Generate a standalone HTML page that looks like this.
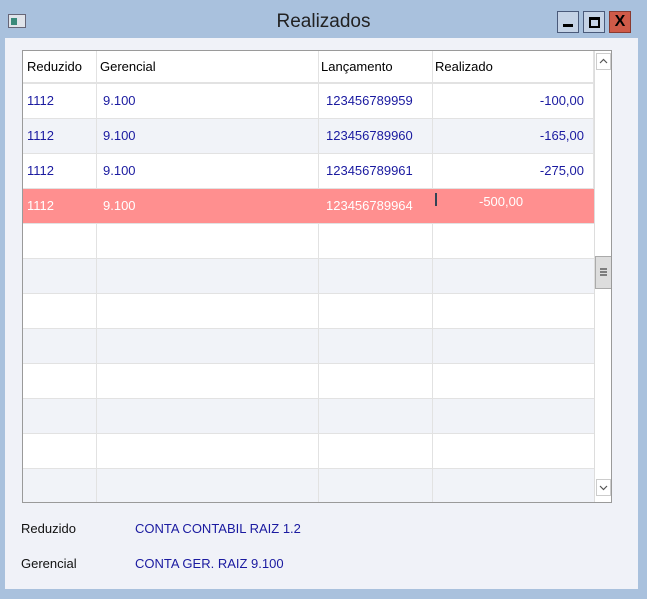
<!DOCTYPE html><html><head><style>
body{margin:0;width:647px;height:599px;background:#a9c1dd;position:relative;overflow:hidden;font-family:"Liberation Sans",sans-serif;}
.t{position:absolute;top:11px;left:0;width:647px;text-align:center;font-size:19px;color:#222;}
.panel{position:absolute;left:5px;top:38px;width:633px;height:551px;background:#f0f2f8;}
.grid{position:absolute;left:22px;top:50px;width:588px;height:451px;border:1px solid #9a9a9a;background:#fff;overflow:hidden;}
.r{position:absolute;left:0;width:571px;height:35px;border-bottom:1px solid #e2e2e2;box-sizing:border-box;}
.c{position:absolute;top:0;height:100%;border-right:1px solid #e2e2e2;box-sizing:border-box;font-size:13px;color:#1a1aa0;line-height:34px;}
.sb{position:absolute;left:571px;top:0;width:17px;height:451px;background:#fff;border-left:1px solid #ddd;}
.lbl{position:absolute;font-size:13px;}
.btn{position:absolute;top:11px;width:22px;height:22px;box-sizing:border-box;border:1px solid #4a5a7a;background:#c5d3e6;}
.ar{position:absolute;left:1px;width:15px;height:17px;border:1px solid #ccc;box-sizing:border-box;background:#fff}
</style></head><body>
<div style="position:absolute;left:8px;top:14px;width:16px;height:12px;background:#e0e4ea;border:1px solid #667;"><div style="position:absolute;left:2px;top:3px;width:6px;height:7px;background:#3a8a7a"></div></div>
<div class="t">Realizados</div>
<div class="btn" style="left:557px"><div style="position:absolute;left:5px;top:12px;width:10px;height:3px;background:#000"></div></div>
<div class="btn" style="left:583px"><div style="position:absolute;left:5px;top:5px;width:7px;height:6px;border:2px solid #000;border-top-width:3px"></div></div>
<div class="btn" style="left:609px;background:#cf5a48;border-color:#8a3a30;color:#000;font-weight:bold;font-size:16px;text-align:center;line-height:20px">X</div>
<div class="panel"></div>
<div class="grid">
<div class="r" style="top:0;height:33px;border-bottom:2px solid #e2e2e2"><div class="c" style="left:0;width:74px;color:#000;padding-left:4px;line-height:31px">Reduzido</div><div class="c" style="left:74px;width:222px;color:#000;padding-left:3px;line-height:31px">Gerencial</div><div class="c" style="left:296px;width:114px;color:#000;padding-left:2px;line-height:31px">Lançamento</div><div class="c" style="left:410px;width:161px;color:#000;padding-left:2px;line-height:31px">Realizado</div></div>
<div class="r" style="top:33px;background:#fff"><div class="c" style="left:0;width:74px;padding-left:4px">1112</div><div class="c" style="left:74px;width:222px;padding-left:6px">9.100</div><div class="c" style="left:296px;width:114px;padding-left:7px">123456789959</div><div class="c" style="left:410px;width:161px;text-align:right;padding-right:9px">-100,00</div></div>
<div class="r" style="top:68px;background:#f1f3f8"><div class="c" style="left:0;width:74px;padding-left:4px">1112</div><div class="c" style="left:74px;width:222px;padding-left:6px">9.100</div><div class="c" style="left:296px;width:114px;padding-left:7px">123456789960</div><div class="c" style="left:410px;width:161px;text-align:right;padding-right:9px">-165,00</div></div>
<div class="r" style="top:103px;background:#fff"><div class="c" style="left:0;width:74px;padding-left:4px">1112</div><div class="c" style="left:74px;width:222px;padding-left:6px">9.100</div><div class="c" style="left:296px;width:114px;padding-left:7px">123456789961</div><div class="c" style="left:410px;width:161px;text-align:right;padding-right:9px">-275,00</div></div>
<div class="r" style="top:138px;background:#ff8f8f"><div class="c" style="left:0;width:74px;padding-left:4px;color:#fff;border:none">1112</div><div class="c" style="left:74px;width:222px;padding-left:6px;color:#fff;border:none">9.100</div><div class="c" style="left:296px;width:114px;padding-left:7px;color:#fff;border:none">123456789964</div><div class="c" style="left:410px;width:161px;color:#fff;border:none;padding-left:46px;line-height:26px"><span style="position:absolute;left:2px;top:4px;width:2px;height:13px;background:#345"></span>-500,00</div></div>
<div class="r" style="top:173px;background:#fff"><div class="c" style="left:0;width:74px"></div><div class="c" style="left:74px;width:222px"></div><div class="c" style="left:296px;width:114px"></div></div>
<div class="r" style="top:208px;background:#f1f3f8"><div class="c" style="left:0;width:74px"></div><div class="c" style="left:74px;width:222px"></div><div class="c" style="left:296px;width:114px"></div></div>
<div class="r" style="top:243px;background:#fff"><div class="c" style="left:0;width:74px"></div><div class="c" style="left:74px;width:222px"></div><div class="c" style="left:296px;width:114px"></div></div>
<div class="r" style="top:278px;background:#f1f3f8"><div class="c" style="left:0;width:74px"></div><div class="c" style="left:74px;width:222px"></div><div class="c" style="left:296px;width:114px"></div></div>
<div class="r" style="top:313px;background:#fff"><div class="c" style="left:0;width:74px"></div><div class="c" style="left:74px;width:222px"></div><div class="c" style="left:296px;width:114px"></div></div>
<div class="r" style="top:348px;background:#f1f3f8"><div class="c" style="left:0;width:74px"></div><div class="c" style="left:74px;width:222px"></div><div class="c" style="left:296px;width:114px"></div></div>
<div class="r" style="top:383px;background:#fff"><div class="c" style="left:0;width:74px"></div><div class="c" style="left:74px;width:222px"></div><div class="c" style="left:296px;width:114px"></div></div>
<div class="r" style="top:418px;background:#f1f3f8;height:40px"><div class="c" style="left:0;width:74px"></div><div class="c" style="left:74px;width:222px"></div><div class="c" style="left:296px;width:114px"></div></div>
<div class="sb">
<div class="ar" style="top:2px"><svg width="13" height="15"><path d="M3 9 L6.5 5.5 L10 9" stroke="#555" fill="none" stroke-width="1.2"/></svg></div>
<div style="position:absolute;top:205px;left:0;width:17px;height:33px;background:#ddd;border:1px solid #aaa;box-sizing:border-box"><svg width="15" height="31"><path d="M4 12h7M4 15h7M4 18h7" stroke="#444" stroke-width="1.3"/></svg></div>
<div class="ar" style="top:428px"><svg width="13" height="15"><path d="M3 6 L6.5 9.5 L10 6" stroke="#555" fill="none" stroke-width="1.2"/></svg></div></div>
</div>
<div class="lbl" style="left:21px;top:521px;color:#111">Reduzido</div>
<div class="lbl" style="left:135px;top:521px;color:#1a1aa0">CONTA CONTABIL RAIZ 1.2</div>
<div class="lbl" style="left:21px;top:556px;color:#111">Gerencial</div>
<div class="lbl" style="left:135px;top:556px;color:#1a1aa0">CONTA GER. RAIZ 9.100</div>
</body></html>
